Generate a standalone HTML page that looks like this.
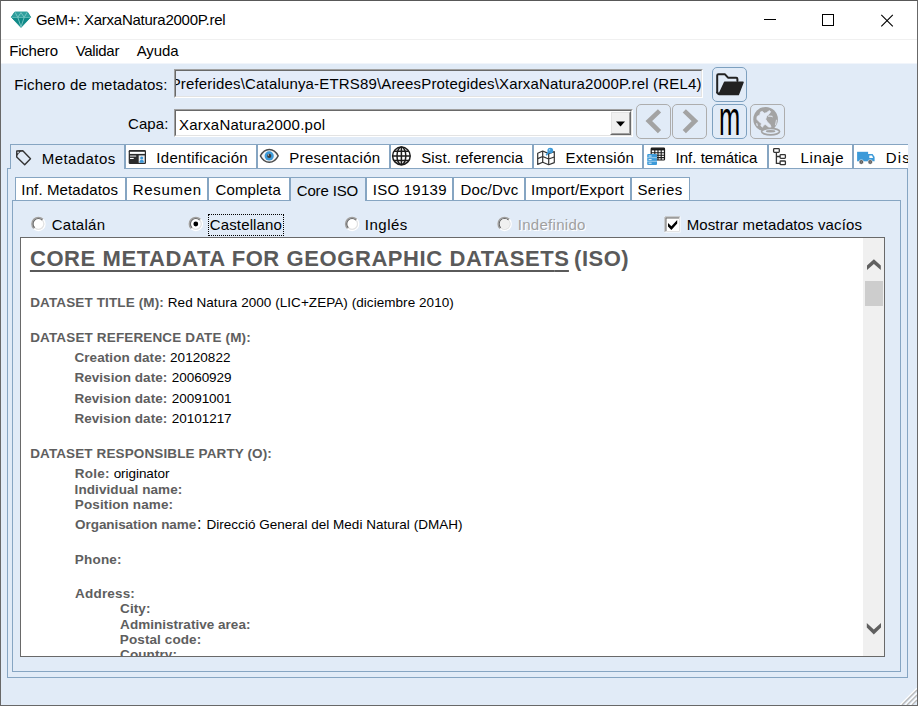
<!DOCTYPE html>
<html lang="es">
<head>
<meta charset="utf-8">
<title>GeM+: XarxaNatura2000P.rel</title>
<style>
*{box-sizing:border-box;margin:0;padding:0}
html,body{width:918px;height:706px;overflow:hidden}
body{position:relative;background:#e1ebf7;font-family:"Liberation Sans",sans-serif;font-size:15px;color:#000}
.abs{position:absolute}
.t{position:absolute;white-space:nowrap;line-height:1}
.page{position:absolute;width:918px;height:706px}
.clip{position:absolute;overflow:hidden}
#title{position:absolute;left:1px;top:1px;width:916px;height:38px;background:#fff}
#menu{position:absolute;left:1px;top:39px;width:916px;height:24px;background:#fff;border-top:1px solid #f0f0f0}
#win{position:absolute;left:0;top:0;width:918px;height:706px;border:1px solid #686868;border-top-color:#585858}
.btn{position:absolute;width:35px;height:35px;border:1px solid #7da0bf;border-radius:5px}
.btn.dis{border-color:#adadad}
.tab{position:absolute;background:#fff;border:1px solid #86a5c2;border-bottom:none}
.tab.sel{background:#e1ebf7}
.pane{position:absolute;border:1px solid #86a5c2}
.sunk{position:absolute;border:1px solid;border-color:#a0a0a0 #fff #fff #a0a0a0}
.sunk>i{position:absolute;left:0;top:0;right:0;bottom:0;border:1px solid;border-color:#696969 #e3e3e3 #e3e3e3 #696969}
</style>
</head>
<body>
<div id="title"></div>
<div id="menu"></div>
<div class="abs" style="left:1px;top:63px;width:916px;height:1px;background:#f1f5fb"></div>

<!-- title bar icon + caption buttons -->
<svg class="abs" style="left:0;top:0" width="60" height="40" viewBox="0 -0.8 60 40">
<path d="M14.800 11.200H27.400L30.700 16.400L21 26.600L11.300 16.400Z" fill="#108a88" stroke="#108a88" stroke-width="0.800" stroke-linejoin="round"/>
<path d="M14.800 11.200H27.400L30.700 16.400H11.300Z" fill="#2f9f9d"/>
<path d="M11.300 16.700H30.700" stroke="#5fb9b7" stroke-width="0.900" fill="none"/>
<path d="M15 11.400L17.800 16.600L21 11.800L24.200 16.600L27.200 11.400M17.800 16.600L21 26M24.200 16.600L21 26" stroke="#7cc7c5" stroke-width="0.900" fill="none"/>
</svg>
<svg class="abs" style="left:750px;top:1px" width="167" height="38" viewBox="0 0 167 38">
<path d="M14 18.500H26" stroke="#000" stroke-width="1"/>
<rect x="72.500" y="13.500" width="11" height="11" fill="none" stroke="#000" stroke-width="1"/>
<path d="M131.300 13.800L142.800 25.300M142.800 13.800L131.300 25.300" stroke="#000" stroke-width="1.1"/>
</svg>

<!-- path field -->
<div class="sunk" style="left:174px;top:69px;width:529px;height:29px;background:#e4ecf9"><i></i></div>
<div class="clip" style="left:176px;top:71px;width:525px;height:25px"><div class="page" style="left:-176px;top:-71px">
<div class="t" id="path" style="left:170.70px;top:76.00px;font-size:15px;letter-spacing:0.166px;">Preferides\Catalunya-ETRS89\AreesProtegides\XarxaNatura2000P.rel (REL4)</div>
</div></div>
<!-- combo -->
<div class="sunk" style="left:174px;top:109px;width:459px;height:28px;background:#fff"><i></i></div>
<div class="abs" style="left:610px;top:111px;width:21px;height:24px;background:#f0f0f0;border:1px solid;border-color:#fff #696969 #696969 #fff"><div class="abs" style="left:0;top:0;right:0;bottom:0;border:1px solid;border-color:#e3e3e3 #a0a0a0 #a0a0a0 #e3e3e3"></div></div>
<svg class="abs" style="left:610px;top:112px" width="21" height="23" viewBox="0 0 21 23"><path d="M6 9.500H15L10.500 14.500Z" fill="#000"/></svg>

<!-- toolbar buttons -->
<div class="btn" style="left:712px;top:67px"></div>
<div class="btn dis" style="left:636px;top:104px"></div>
<div class="btn dis" style="left:672px;top:104px"></div>
<div class="btn" style="left:712px;top:104px"></div>
<div class="btn dis" style="left:750px;top:104px"></div>
<svg class="abs" style="left:0;top:60px" width="918" height="85" viewBox="0 60 918 85">
<!-- open folder -->
<g fill="none" stroke="#222" stroke-width="2" stroke-linejoin="round" stroke-linecap="round">
<path d="M717.2 92.500V75.500Q717.200 74.300 718.400 74.300H725L728 77.700H736.200Q737.400 77.700 737.400 78.900V81"/>
<path d="M717.200 92.500L718.500 94"/>
</g>
<path d="M719 94.500L724.800 82.200H743L738.300 94.500Z" fill="#222" stroke="#222" stroke-width="1.6" stroke-linejoin="round"/>
<!-- prev / next -->
<path d="M659.500 110.800L648.800 121L659.500 131.700" fill="none" stroke="#a3a3a3" stroke-width="4.600"/>
<path d="M684.300 110.800L695 121L684.300 131.700" fill="none" stroke="#a3a3a3" stroke-width="4.600"/>
<!-- disabled globe -->
<g>
<circle cx="765.600" cy="119.300" r="12.300" fill="#a3a3a3"/>
<path d="M760.600 111.900L762.500 111.400L764.100 113.300L766.300 112.800L769.500 110.600L770.600 111.700L769.500 113.600L766.800 116L765.700 119.200L767.400 121.900L770 124.600L771.100 127.300L769.500 127.800L765.700 124.600L763.600 125.100L762.500 127.300L760.900 125.700L761.400 123.500L758.800 121.400L756.900 119.200L757.100 116.500L759.800 114.900Z" fill="#e3eaf5" stroke="#e3eaf5" stroke-width="0.800" stroke-linejoin="round"/>
<path d="M756.100 123L757.400 123.500L757.900 126.200L756.600 125.700ZM767.900 115.400L772.200 115.700L773 117.600L771.100 116.800L768.200 116.800ZM776 119.700L776.900 119.700L776.300 124.600L774.900 125.700Z" fill="#dfe5ee"/>
<ellipse cx="770.600" cy="131.600" rx="9" ry="3.200" fill="#e1ebf7" stroke="#a3a3a3" stroke-width="1.700"/>
<ellipse cx="770.600" cy="131.200" rx="4.800" ry="1.200" fill="#a3a3a3"/>
</g>
</svg>
<div class="t" style="left:719px;top:94.6px;font-size:26px;transform:scale(0.98,1.82);transform-origin:0 0;color:#000">m</div>

<!-- tab panes -->
<div class="pane" style="left:7px;top:168px;width:901px;height:510px"></div>
<div class="pane" style="left:12px;top:200px;width:889px;height:472px"></div>

<!-- tabs row 1 -->
<div class="clip" style="left:0;top:140px;width:908px;height:40px"><div class="page" style="left:0;top:-140px">
<div class="tab" style="left:125px;top:144px;width:132px;height:24px"></div>
<div class="tab" style="left:257px;top:144px;width:133px;height:24px"></div>
<div class="tab" style="left:390px;top:144px;width:143px;height:24px"></div>
<div class="tab" style="left:533px;top:144px;width:110px;height:24px"></div>
<div class="tab" style="left:643px;top:144px;width:125px;height:24px"></div>
<div class="tab" style="left:768px;top:144px;width:85px;height:24px"></div>
<div class="tab" style="left:853px;top:144px;width:111px;height:24px"></div>
<div class="tab sel" style="left:10px;top:144px;width:115px;height:25px"></div>
<svg class="abs" style="left:0;top:140px" width="918" height="35" viewBox="0 140 918 35">
<!-- tag -->
<path d="M16.900 151.200L22.800 150.800L30.500 158.700L24.700 164.700L16.700 157.100Z" fill="none" stroke="#333" stroke-width="1.400" stroke-linejoin="round"/>
<path d="M16.300 150.500L21.800 150.300L16.300 156.400Z" fill="#333"/>
<circle cx="18.100" cy="152.400" r="0.850" fill="#c4cbd4"/>
<!-- id card -->
<rect x="128.700" y="150.100" width="17.300" height="13.800" rx="1.200" fill="#2b2b2b"/>
<rect x="129.900" y="151.800" width="14.900" height="2.100" fill="#fff"/>
<rect x="130" y="155.200" width="6.200" height="1.800" fill="#9a9a9a"/>
<rect x="130" y="157.900" width="3.700" height="1.100" fill="#fff"/>
<rect x="138.700" y="155.400" width="6" height="7.400" fill="#e8edf2"/>
<circle cx="141.700" cy="157.900" r="1.500" fill="#3c96d6"/>
<path d="M139.700 162.800V161.300Q139.700 159.700 141.700 159.700Q143.700 159.700 143.700 161.300V162.800Z" fill="#3c96d6"/>
<!-- eye -->
<path d="M260.400 155.900C262.800 151.200 266 149.500 269.300 149.500C272.600 149.500 275.800 151.200 278.200 155.900C275.800 160.600 272.600 162.300 269.300 162.300C266 162.300 262.800 160.600 260.400 155.900Z" fill="#f4f4f4" stroke="#4a4a4a" stroke-width="1.400"/>
<circle cx="269.200" cy="155.900" r="4.600" fill="#3c9ad9"/>
<circle cx="269.200" cy="155.900" r="2.100" fill="#3a3a3a"/>
<circle cx="268.400" cy="155" r="0.700" fill="#cfcfcf"/>
<!-- globe -->
<g fill="none" stroke="#1c1c1c" stroke-width="1.500">
<circle cx="401.400" cy="155.900" r="8.800"/>
<ellipse cx="401.400" cy="155.900" rx="4.400" ry="8.800"/>
<path d="M401.400 147.100V164.700M392.600 155.900H410.200M394 151.300H408.800M394 160.500H408.800"/>
</g>
<!-- map + pin -->
<g fill="none" stroke="#333" stroke-width="1.200" stroke-linejoin="round">
<path d="M537.700 153.300L542.700 151L548.700 153.600L554.300 151.600V162.600L548.700 164.700L542.700 162.200L537.700 164.400Z"/>
<path d="M542.700 151V162.200M548.700 153.600V164.700M537.700 158.600L542.700 156.500L548.700 159L554.300 157"/>
</g>
<path d="M546.200 155.200L549 151.800" stroke="#3c9ad9" stroke-width="1.600"/>
<circle cx="550.300" cy="150.600" r="2.900" fill="#3c9ad9"/>
<circle cx="549.600" cy="149.900" r="0.800" fill="#a9d3f0"/>
<!-- table + db -->
<rect x="651.200" y="148.200" width="13.300" height="11.800" rx="0.800" fill="#fff" stroke="#1a1a1a" stroke-width="1.200"/>
<rect x="651.200" y="148.200" width="13.300" height="2.200" fill="#1a1a1a"/>
<path d="M654.800 150V160M658 150V160M661.200 150V160M651.200 152.800H664.500M651.200 155.200H664.500M651.200 157.600H664.500" stroke="#1a1a1a" stroke-width="1.100" fill="none"/>
<rect x="647.200" y="154.100" width="9.800" height="10.900" rx="1" fill="#3c9ad9"/>
<path d="M647.200 157.700H657M647.200 161.300H657" stroke="#fff" stroke-width="0.500"/>
<path d="M648.600 156H651.600M648.600 159.600H651.600M648.600 163.200H651.600" stroke="#e8f3fb" stroke-width="1"/>
<!-- tree -->
<g fill="#fff" stroke="#333" stroke-width="1.300" stroke-linejoin="round">
<path d="M776.400 152.600V163.400H780M776.400 156.500H780" fill="none"/>
<rect x="773.600" y="148.700" width="5.700" height="3.700" rx="0.800"/>
<rect x="780.100" y="154.600" width="5.300" height="3.700" rx="0.800"/>
<rect x="780.100" y="161" width="5.300" height="3.700" rx="0.800"/>
</g>
<!-- truck -->
<rect x="857.100" y="151.800" width="11" height="9.500" fill="#3c9ad9"/>
<path d="M868 154.100H872.600L874.600 157V161.300H868Z" fill="#3c9ad9"/>
<path d="M869.300 155.400H872L873.200 158H869.300Z" fill="#fff"/>
<circle cx="861.300" cy="162" r="2.300" fill="#555" stroke="#fff" stroke-width="0.600"/>
<circle cx="870.200" cy="162" r="2.300" fill="#555" stroke="#fff" stroke-width="0.600"/>
<circle cx="861.300" cy="162" r="0.800" fill="#9a9a9a"/>
<circle cx="870.200" cy="162" r="0.800" fill="#9a9a9a"/>
</svg>
<div class="t" id="t1" style="left:41.80px;top:151.00px;font-size:15px;letter-spacing:0.424px;">Metadatos</div>
<div class="t" id="t2" style="left:156.36px;top:150.00px;font-size:15px;letter-spacing:0.288px;">Identificación</div>
<div class="t" id="t3" style="left:289.30px;top:150.00px;font-size:15px;letter-spacing:0.297px;">Presentación</div>
<div class="t" id="t4" style="left:421.21px;top:150.00px;font-size:15px;letter-spacing:0.120px;">Sist. referencia</div>
<div class="t" id="t5" style="left:565.40px;top:150.00px;font-size:15px;letter-spacing:0.334px;">Extensión</div>
<div class="t" id="t6" style="left:675.56px;top:150.00px;font-size:15px;letter-spacing:0.016px;">Inf. temática</div>
<div class="t" id="t7" style="left:800.50px;top:150.00px;font-size:15px;letter-spacing:0.606px;">Linaje</div>
<div class="t" id="t8" style="left:885.70px;top:150.00px;font-size:15px;letter-spacing:1.155px;">Distribución</div>
</div></div>

<!-- tabs row 2 -->
<div class="tab" style="left:15px;top:177px;width:111px;height:23px"></div>
<div class="tab" style="left:126px;top:177px;width:82px;height:23px"></div>
<div class="tab" style="left:208px;top:177px;width:82px;height:23px"></div>
<div class="tab" style="left:366px;top:177px;width:87px;height:23px"></div>
<div class="tab" style="left:453px;top:177px;width:72px;height:23px"></div>
<div class="tab" style="left:525px;top:177px;width:106px;height:23px"></div>
<div class="tab" style="left:631px;top:177px;width:59px;height:23px"></div>
<div class="tab sel" style="left:290px;top:177px;width:76px;height:24px"></div>

<!-- radios / checkbox -->
<svg class="abs" style="left:0;top:210px" width="918" height="28" viewBox="0 210 918 28">
<defs>
<g id="rad">
<circle r="6.600" fill="none" stroke="#fff" stroke-width="1.300"/>
<circle r="5.400" fill="#fff" stroke="#e3e3e3" stroke-width="1.200"/>
<path d="M-4.670 4.670A6.600 6.600 0 0 1 4.670 -4.670" fill="none" stroke="#a0a0a0" stroke-width="1.300"/>
<path d="M-3.820 3.820A5.400 5.400 0 0 1 3.820 -3.820" fill="none" stroke="#696969" stroke-width="1.200"/>
</g>
</defs>
<use href="#rad" x="38.400" y="223.900"/>
<use href="#rad" x="195.800" y="223.900"/>
<circle cx="195.800" cy="224" r="2.400" fill="#000"/>
<use href="#rad" x="352.100" y="223.900"/>
<use href="#rad" x="504.600" y="223.900"/>
<circle cx="504.600" cy="223.900" r="4.800" fill="#f0f0f0"/>
<!-- focus rect -->

<!-- checkbox -->
<rect x="664.500" y="216.500" width="16" height="16" fill="#fff"/>
<path d="M665 232V217H680" fill="none" stroke="#a0a0a0" stroke-width="1"/>
<path d="M666 231V218H679" fill="none" stroke="#696969" stroke-width="1"/>
<path d="M666 231.500H679.500V218" fill="none" stroke="#e3e3e3" stroke-width="1"/>
<path d="M668 222.900L671.400 226.300L677.200 219.900V223.500L671.400 229.900L668 226.500Z" fill="#000"/>
</svg>
<div class="abs" style="left:208px;top:214px;width:76px;height:22px;border:1px dotted #000"></div>

<!-- content box -->
<div class="clip" style="left:20px;top:237px;width:865px;height:420px;background:#fff;border:1px solid #696969"><div class="page" style="left:-21px;top:-238px">
<div class="t" id="h1" style="left:29.91px;top:248.00px;font-size:22px;font-weight:bold;color:#5a5a5a;letter-spacing:0.588px;text-decoration:underline;text-decoration-thickness:2px;text-underline-offset:3.5px;text-decoration-skip-ink:none;">CORE METADATA FOR GEOGRAPHIC DATASET<span style="letter-spacing:0">S</span></div>
<div class="t" id="h1b" style="left:574.09px;top:248.00px;font-size:22px;font-weight:bold;color:#5a5a5a;letter-spacing:0.488px;">(ISO)</div>
<div class="t" id="d1" style="left:30.17px;top:296.00px;font-size:13.5px;font-weight:bold;color:#5e5e5e;letter-spacing:0.130px;">DATASET TITLE (M):</div>
<div class="t" id="d1v" style="left:167.79px;top:296.00px;font-size:13.5px;letter-spacing:0.053px;">Red Natura 2000 (LIC+ZEPA) (diciembre 2010)</div>
<div class="t" id="d2" style="left:30.17px;top:331.00px;font-size:13.5px;font-weight:bold;color:#5e5e5e;letter-spacing:0.147px;">DATASET REFERENCE DATE (M):</div>
<div class="t" id="d3" style="left:74.40px;top:351.00px;font-size:13.5px;font-weight:bold;color:#5e5e5e;letter-spacing:0.087px;">Creation date:</div>
<div class="t" id="d3v" style="left:170.01px;top:351.00px;font-size:13.5px;letter-spacing:0.059px;">20120822</div>
<div class="t" id="d4" style="left:74.47px;top:371.00px;font-size:13.5px;font-weight:bold;color:#5e5e5e;letter-spacing:0.035px;">Revision date:</div>
<div class="t" id="d4v" style="left:171.81px;top:371.00px;font-size:13.5px;letter-spacing:-0.045px;">20060929</div>
<div class="t" id="d5" style="left:74.47px;top:392.00px;font-size:13.5px;font-weight:bold;color:#5e5e5e;letter-spacing:0.035px;">Revision date:</div>
<div class="t" id="d5v" style="left:171.81px;top:392.00px;font-size:13.5px;letter-spacing:-0.045px;">20091001</div>
<div class="t" id="d6" style="left:74.47px;top:412.00px;font-size:13.5px;font-weight:bold;color:#5e5e5e;letter-spacing:0.035px;">Revision date:</div>
<div class="t" id="d6v" style="left:171.81px;top:412.00px;font-size:13.5px;letter-spacing:-0.036px;">20101217</div>
<div class="t" id="d7" style="left:30.17px;top:447.00px;font-size:13.5px;font-weight:bold;color:#5e5e5e;letter-spacing:0.118px;">DATASET RESPONSIBLE PARTY (O):</div>
<div class="t" id="d8" style="left:74.87px;top:467.00px;font-size:13.5px;font-weight:bold;color:#5e5e5e;letter-spacing:0.202px;">Role:</div>
<div class="t" id="d8v" style="left:113.67px;top:467.00px;font-size:13.5px;letter-spacing:-0.056px;">originator</div>
<div class="t" id="d9" style="left:74.61px;top:483.00px;font-size:13.5px;font-weight:bold;color:#5e5e5e;letter-spacing:0.076px;">Individual name:</div>
<div class="t" id="d10" style="left:74.87px;top:498.00px;font-size:13.5px;font-weight:bold;color:#5e5e5e;letter-spacing:0.107px;">Position name:</div>
<div class="t" id="d11" style="left:75.10px;top:518.00px;font-size:13.5px;font-weight:bold;color:#5e5e5e;letter-spacing:-0.071px;">Organisation name</div>
<div class="t" id="d11c" style="left:197.00px;top:516.00px;font-size:16px;">:</div>
<div class="t" id="d11v" style="left:206.49px;top:518.00px;font-size:13.5px;letter-spacing:0.024px;">Direcció General del Medi Natural (DMAH)</div>
<div class="t" id="d12" style="left:74.87px;top:553.00px;font-size:13.5px;font-weight:bold;color:#5e5e5e;letter-spacing:0.190px;">Phone:</div>
<div class="t" id="d13" style="left:75.12px;top:587.00px;font-size:13.5px;font-weight:bold;color:#5e5e5e;letter-spacing:0.177px;">Address:</div>
<div class="t" id="d14" style="left:120.10px;top:602.00px;font-size:13.5px;font-weight:bold;color:#5e5e5e;letter-spacing:0.087px;">City:</div>
<div class="t" id="d15" style="left:120.12px;top:618.00px;font-size:13.5px;font-weight:bold;color:#5e5e5e;letter-spacing:0.028px;">Administrative area:</div>
<div class="t" id="d16" style="left:119.87px;top:633.00px;font-size:13.5px;font-weight:bold;color:#5e5e5e;letter-spacing:0.096px;">Postal code:</div>
<div class="t" id="d17" style="left:120.10px;top:648.00px;font-size:13.5px;font-weight:bold;color:#5e5e5e;letter-spacing:0.080px;">Country:</div>
<div class="abs" style="left:863px;top:238px;width:21px;height:418px;background:#f0f0f0"></div>
<div class="abs" style="left:865px;top:281px;width:18px;height:25px;background:#cdcdcd"></div>
<svg class="abs" style="left:0;top:238px" width="918" height="420" viewBox="0 238 918 420">
<path d="M867 270L873.900 264.100L880.800 270V265.600L873.900 259.200L867 265.600Z" fill="#606060"/>
<path d="M866.800 623.100L873.800 629.400L881 623.100V627.600L873.800 634.400L866.800 627.600Z" fill="#606060"/>
</svg>
</div></div>

<div class="t" id="cap" style="left:35.94px;top:12.00px;font-size:15px;letter-spacing:-0.253px;">GeM+: XarxaNatura2000P.rel</div>
<div class="t" id="m1" style="left:9.20px;top:43.00px;font-size:15px;letter-spacing:-0.204px;">Fichero</div>
<div class="t" id="m2" style="left:75.65px;top:43.00px;font-size:15px;letter-spacing:-0.305px;">Validar</div>
<div class="t" id="m3" style="left:136.68px;top:43.00px;font-size:15px;letter-spacing:-0.101px;">Ayuda</div>
<div class="t" id="l1" style="left:14.20px;top:77.00px;font-size:15px;letter-spacing:0.200px;">Fichero de metadatos:</div>
<div class="t" id="l2" style="left:127.93px;top:116.00px;font-size:15px;letter-spacing:0.138px;">Capa:</div>
<div class="t" id="combo" style="left:178.99px;top:117.00px;font-size:15px;letter-spacing:0.243px;">XarxaNatura2000.pol</div>
<div class="t" id="s1" style="left:21.36px;top:182.00px;font-size:15px;letter-spacing:0.119px;">Inf. Metadatos</div>
<div class="t" id="s2" style="left:132.70px;top:182.00px;font-size:15px;letter-spacing:0.709px;">Resumen</div>
<div class="t" id="s3" style="left:215.43px;top:182.00px;font-size:15px;letter-spacing:0.164px;">Completa</div>
<div class="t" id="s4" style="left:296.73px;top:183.00px;font-size:15px;letter-spacing:-0.146px;">Core ISO</div>
<div class="t" id="s5" style="left:372.76px;top:182.00px;font-size:15px;letter-spacing:0.252px;">ISO 19139</div>
<div class="t" id="s6" style="left:460.40px;top:182.00px;font-size:15px;letter-spacing:0.178px;">Doc/Dvc</div>
<div class="t" id="s7" style="left:531.06px;top:182.00px;font-size:15px;letter-spacing:0.229px;">Import/Export</div>
<div class="t" id="s8" style="left:637.41px;top:182.00px;font-size:15px;letter-spacing:0.451px;">Series</div>
<div class="t" id="r1" style="left:51.73px;top:217.00px;font-size:15px;letter-spacing:0.265px;">Catalán</div>
<div class="t" id="r2" style="left:209.73px;top:217.00px;font-size:15px;letter-spacing:0.145px;">Castellano</div>
<div class="t" id="r3" style="left:364.86px;top:217.00px;font-size:15px;letter-spacing:0.496px;">Inglés</div>
<div class="t" id="r4" style="left:517.76px;top:217.00px;font-size:15px;color:#a0a0a0;letter-spacing:0.294px;text-shadow:1px 1px 0 #fff;">Indefinido</div>
<div class="t" id="r5" style="left:686.70px;top:217.00px;font-size:15px;letter-spacing:0.115px;">Mostrar metadatos vacíos</div>

<!-- resize grip -->
<svg class="abs" style="left:898px;top:686px" width="19" height="19" viewBox="0 0 19 19">
<path d="M19 2.300L2.300 19M19 7.300L7.300 19M19 12.300L12.300 19" stroke="#fff" stroke-width="1.500"/>
<path d="M19 4L4 19M19 9L9 19M19 14L14 19" stroke="#b9b9b9" stroke-width="1.400"/>
</svg>
<div id="win"></div>
</body>
</html>
